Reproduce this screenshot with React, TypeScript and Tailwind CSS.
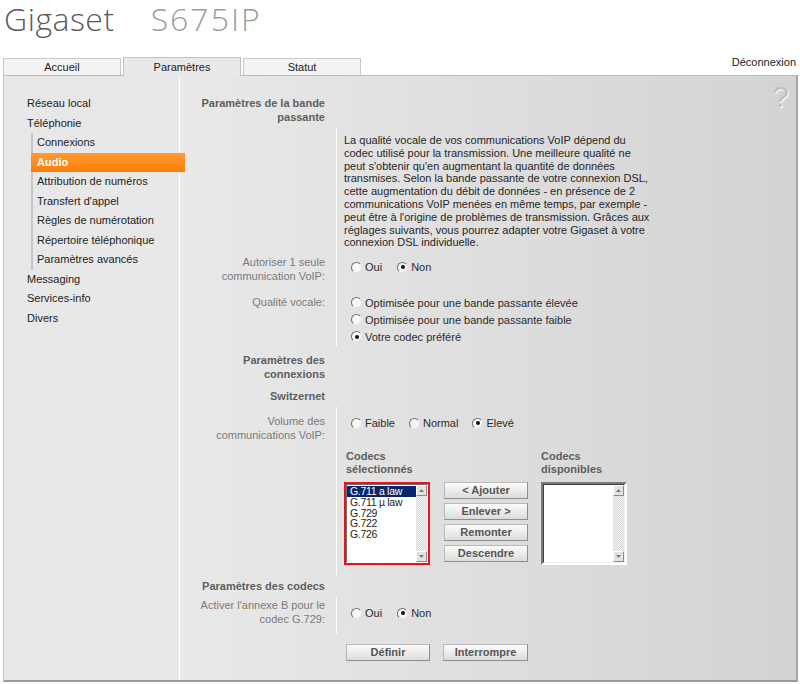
import React from "react";

function Radio({ checked = false }: { checked?: boolean }) {
  return (
    <span className="inline-flex h-[11px] w-[11px] shrink-0 items-center justify-center rounded-full border border-[#6f6f6f] border-r-[#e4e4e4] border-b-[#e4e4e4] bg-[#f7f7f7]">
      {checked && <span className="h-[4px] w-[4px] rounded-full bg-[#111]" />}
    </span>
  );
}

function Option({ label, checked = false }: { label: string; checked?: boolean }) {
  return (
    <label className="flex h-[14px] items-center gap-[3px] leading-[14px] text-[#2b2b2b]">
      <Radio checked={checked} />
      <span>{label}</span>
    </label>
  );
}

function Arrow({ up = false }: { up?: boolean }) {
  return (
    <div className="flex h-[11px] w-[11px] items-center justify-center border border-white border-r-[#8c8c8c] border-b-[#8c8c8c] bg-[#e3e3e3]">
      <svg width="5" height="3" viewBox="0 0 5 3">
        {up ? <path d="M0 3 L2.5 0 L5 3 Z" fill="#7a7a7a" /> : <path d="M0 0 L2.5 3 L5 0 Z" fill="#7a7a7a" />}
      </svg>
    </div>
  );
}

function ScrollBar() {
  return (
    <div className="flex w-[11px] shrink-0 flex-col">
      <Arrow up />
      <div className="flex-1 bg-[repeating-conic-gradient(#d6d6d6_0%_25%,#f5f5f5_0%_50%)] bg-[length:2px_2px]" />
      <Arrow />
    </div>
  );
}

function Btn({ children, w = "w-[84px]" }: { children: React.ReactNode; w?: string }) {
  return (
    <button
      className={`${w} h-[17px] border border-[#b9b9b9] border-r-[#8e8e8e] border-b-[#8e8e8e] bg-linear-to-b from-[#fcfcfc] to-[#dcdcdc] text-[11px] font-bold leading-none text-[#555]`}
    >
      {children}
    </button>
  );
}

const subItems = [
  "Connexions",
  "Audio",
  "Attribution de numéros",
  "Transfert d'appel",
  "Règles de numérotation",
  "Répertoire téléphonique",
  "Paramètres avancés",
];

export default function App() {
  return (
    <div className="h-[684px] w-[800px] overflow-hidden bg-white font-['Liberation_Sans',Arial,sans-serif] text-[11px]">
      {/* Title */}
      <div className="flex h-[57px] items-start pl-[4px] font-['Open_Sans',sans-serif] text-[32px] font-light">
        <span className="-mt-[1px] leading-[40px] tracking-[0.5px] text-[#5a5a5a]">Gigaset</span>
        <span className="-mt-[1px] ml-[36px] leading-[40px] tracking-[2px] text-[#9c9c9c]">S675IP</span>
      </div>

      {/* Tabs */}
      <div className="flex h-[18px] items-end pl-[3px]">
        <div className="h-[17px] w-[118px] border border-b-0 border-[#c9c9c9] bg-[#f3f3f3] text-center leading-[16px] text-[#222]">
          Accueil
        </div>
        <div className="relative z-20 -mb-px ml-[2px] h-[19px] w-[118px] border border-b-0 border-[#c2c2c2] bg-[#e9e9e9] text-center leading-[18px] text-[#222]">
          Paramètres
        </div>
        <div className="ml-[2px] h-[17px] w-[118px] border border-b-0 border-[#c9c9c9] bg-[#f3f3f3] text-center leading-[16px] text-[#222]">
          Statut
        </div>
        <div className="-mt-[2px] mr-[4px] ml-auto self-start leading-[14px] text-[#222]">Déconnexion</div>
      </div>

      {/* Panel */}
      <div className="relative ml-[3px] flex h-[607px] w-[795px] border-t border-l border-t-[#bdbdbd] border-l-[#c6c6c6] border-r-2 border-r-[#a3a3a3] border-b-2 border-b-[#9a9a9a]">
        {/* Sidebar */}
        <aside className="relative z-10 w-[176px] shrink-0 border-r border-white bg-[#e8e8e8] pt-[18px] pl-[23px] text-[#222]">
          <div className="h-[19.5px] leading-[19.5px]">Réseau local</div>
          <div className="h-[19.5px] leading-[19.5px]">Téléphonie</div>
          <div className="ml-[4px] border-l-2 border-[#c6c6c6]">
            {subItems.map((s) =>
              s === "Audio" ? (
                <div
                  key={s}
                  className="-ml-[2px] h-[19.5px] w-[154px] bg-linear-to-b from-[#ff9a30] to-[#ff7c00] pl-[6px] font-bold leading-[19.5px] text-white"
                >
                  {s}
                </div>
              ) : (
                <div key={s} className="h-[19.5px] pl-[4px] leading-[19.5px]">
                  {s}
                </div>
              )
            )}
          </div>
          <div className="h-[19.5px] leading-[19.5px]">Messaging</div>
          <div className="h-[19.5px] leading-[19.5px]">Services-info</div>
          <div className="h-[19.5px] leading-[19.5px]">Divers</div>
        </aside>

        {/* Main */}
        <main className="relative flex-1 bg-linear-to-r from-[#e9e9e9] to-[#d3d3d3] pt-[20px] pl-[15px]">
          <span className="absolute top-[6px] right-[7px] text-[30px] leading-none text-[#c0c0c0] [text-shadow:1px_1px_0_#ffffff]">
            ?
          </span>

          <div className="w-[130px] text-right font-bold leading-[14px] text-[#5e5e5e]">
            Paramètres de la bande
            <br />
            passante
          </div>

          {/* Description */}
          <div className="mt-[4px] flex h-[125px]">
            <div className="w-[130px] shrink-0" />
            <div className="ml-[11px] flex-1 border-l border-white pt-[6px] pl-[7px] leading-[12.8px] whitespace-nowrap text-[#262626]">
              La qualité vocale de vos communications VoIP dépend du
              <br />
              codec utilisé pour la transmission. Une meilleure qualité ne
              <br />
              peut s'obtenir qu'en augmentant la quantité de données
              <br />
              transmises. Selon la bande passante de votre connexion DSL,
              <br />
              cette augmentation du débit de données - en présence de 2
              <br />
              communications VoIP menées en même temps, par exemple -
              <br />
              peut être à l'origine de problèmes de transmission. Grâces aux
              <br />
              réglages suivants, vous pourrez adapter votre Gigaset à votre
              <br />
              connexion DSL individuelle.
            </div>
          </div>

          {/* Autoriser */}
          <div className="flex h-[39px]">
            <div className="w-[130px] shrink-0 pt-[2px] text-right leading-[14px] text-[#7a7a7a]">
              Autoriser 1 seule
              <br />
              communication VoIP:
            </div>
            <div className="ml-[11px] flex flex-1 items-start gap-[15px] border-l border-white pt-[7px] pl-[14px]">
              <Option label="Oui" />
              <Option label="Non" checked />
            </div>
          </div>

          {/* Qualité vocale */}
          <div className="flex h-[54px]">
            <div className="w-[130px] shrink-0 pt-[3px] text-right leading-[14px] text-[#7a7a7a]">Qualité vocale:</div>
            <div className="ml-[11px] flex-1 border-l border-white pt-[2px] pl-[14px]">
              <div className="flex h-[17px] items-center">
                <Option label="Optimisée pour une bande passante élevée" />
              </div>
              <div className="flex h-[17px] items-center">
                <Option label="Optimisée pour une bande passante faible" />
              </div>
              <div className="flex h-[17px] items-center">
                <Option label="Votre codec préféré" checked />
              </div>
            </div>
          </div>

          <div className="mt-[7px] w-[130px] text-right font-bold leading-[14px] text-[#5e5e5e]">
            Paramètres des
            <br />
            connexions
          </div>
          <div className="mt-[8px] w-[130px] text-right font-bold leading-[14px] text-[#5e5e5e]">Switzernet</div>

          {/* Volume */}
          <div className="mt-[4px] flex h-[37px]">
            <div className="w-[130px] shrink-0 pt-[7px] text-right leading-[14px] text-[#7a7a7a]">
              Volume des
              <br />
              communications VoIP:
            </div>
            <div className="ml-[11px] flex flex-1 items-start gap-[14px] border-l border-white pt-[9px] pl-[14px]">
              <Option label="Faible" />
              <Option label="Normal" />
              <Option label="Elevé" checked />
            </div>
          </div>

          {/* Codecs */}
          <div className="flex h-[131px]">
            <div className="w-[130px] shrink-0" />
            <div className="ml-[11px] flex-1 border-l border-white pt-[6px] pl-[7px]">
              <div className="flex font-bold leading-[13px] text-[#5e5e5e]">
                <div className="w-[197px] pl-[2px]">
                  Codecs
                  <br />
                  sélectionnés
                </div>
                <div>
                  Codecs
                  <br />
                  disponibles
                </div>
              </div>
              <div className="mt-[6px] flex items-start">
                <div className="h-[83px] w-[86px] border-2 border-[#e8141a]">
                  <div className="flex h-full border border-[#6e6e6e] border-r-white border-b-white">
                    <div className="flex-1 bg-white pt-[1px] text-[10.5px] leading-[10.8px] tracking-[-0.3px] text-[#1e1e1e]">
                      <div className="bg-[#0a246a] pl-[3px] text-white">G.711 a law</div>
                      <div className="pl-[3px]">G.711 µ law</div>
                      <div className="pl-[3px]">G.729</div>
                      <div className="pl-[3px]">G.722</div>
                      <div className="pl-[3px]">G.726</div>
                    </div>
                    <ScrollBar />
                  </div>
                </div>
                <div className="ml-[14px] flex flex-col gap-[4px]">
                  <Btn>&lt; Ajouter</Btn>
                  <Btn>Enlever &gt;</Btn>
                  <Btn>Remonter</Btn>
                  <Btn>Descendre</Btn>
                </div>
                <div className="ml-[13px] flex h-[83px] w-[86px] border-2 border-[#7a7a7a] border-r-white border-b-white bg-white">
                  <div className="flex h-full flex-1 border border-[#404040] border-r-[#eeeeee] border-b-[#eeeeee]">
                    <div className="flex-1 bg-white" />
                    <ScrollBar />
                  </div>
                </div>
              </div>
            </div>
          </div>

          <div className="mt-[4px] w-[130px] text-right font-bold leading-[14px] text-[#5e5e5e]">Paramètres des codecs</div>

          {/* Annexe B */}
          <div className="mt-[4px] flex h-[37px]">
            <div className="w-[130px] shrink-0 pt-[1px] text-right leading-[14px] text-[#7a7a7a]">
              Activer l'annexe B pour le
              <br />
              codec G.729:
            </div>
            <div className="ml-[11px] flex flex-1 items-start gap-[15px] border-l border-white pt-[9px] pl-[14px]">
              <Option label="Oui" />
              <Option label="Non" checked />
            </div>
          </div>

          <div className="mt-[10px] ml-[151px] flex gap-[13px]">
            <Btn>Définir</Btn>
            <Btn w="w-[85px]">Interrompre</Btn>
          </div>
        </main>
      </div>
    </div>
  );
}
